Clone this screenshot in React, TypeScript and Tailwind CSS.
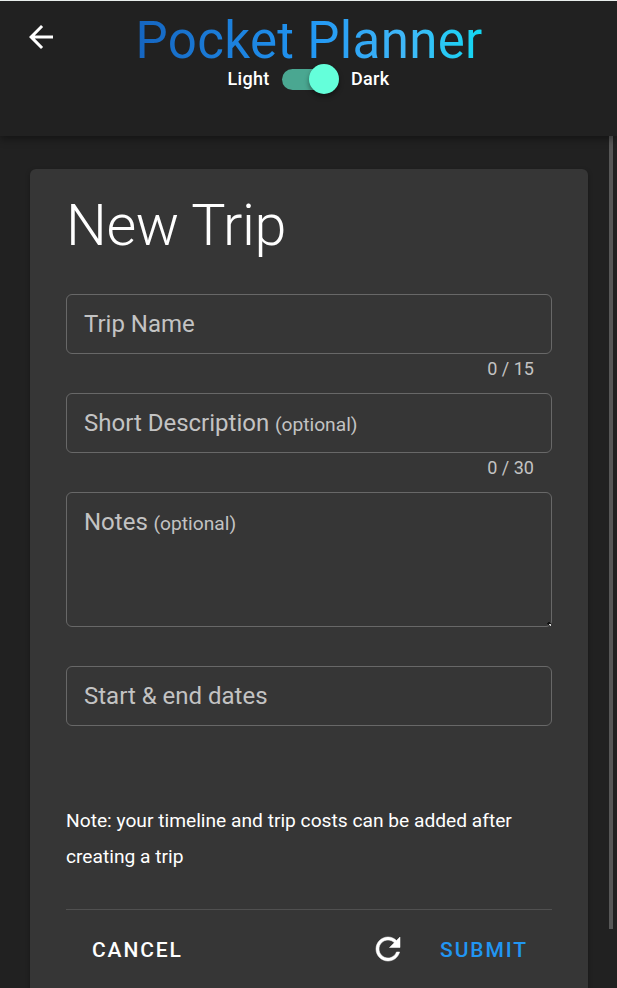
import type { ReactNode } from "react";

function MaterialIcon({ path, bold }: { path: string; bold?: boolean }) {
  return (
    <svg
      viewBox="0 0 24 24"
      className={"block size-9 fill-current " + (bold ? "stroke-current stroke-[0.35]" : "")}
      aria-hidden="true"
    >
      <path d={path} />
    </svg>
  );
}

function Counter({ children }: { children: ReactNode }) {
  return (
    <div className="flex h-[39px] justify-end pt-px pr-[18px] text-[18px] leading-[27px] text-[#c3c3c3]">
      {children}
    </div>
  );
}

function Field({ label, optional, tall }: { label: string; optional?: boolean; tall?: boolean }) {
  return (
    <div
      className={
        "relative rounded-[6px] border border-[#686868] px-[17px] pt-[11px] text-[24px] leading-[36px] whitespace-nowrap text-[#c3c3c3] " +
        (tall ? "h-[135px]" : "h-[60px]")
      }
    >
      {label}
      {optional && <span className="ml-px text-[19.2px]"> (optional)</span>}
      {tall && (
        <svg viewBox="0 0 6 6" className="absolute -right-px -bottom-px size-[6px]">
          <path d="M1 2h1V1h2v1h1v1H4v1H2V3H1z" fill="#111" />
          <path d="M3 3h1v1H3zM4 4h1v1H4zM4 3h1v1H4z" fill="#dcdcdc" />
        </svg>
      )}
    </div>
  );
}

export default function App() {
  return (
    <div className="flex h-[988px] w-[617px] flex-col overflow-hidden bg-[#212121] font-[Roboto,sans-serif] text-white">
      <header className="relative z-10 flex h-[136px] shrink-0 border-t border-[#e9eeec] bg-[#212121] shadow-[0_3px_8px_rgba(0,0,0,0.4)]">
        <button className="ml-[23px] mt-[18px] size-9">
          <MaterialIcon path="M20 11H7.83l5.59-5.59L12 4l-8 8 8 8 1.41-1.41L7.83 13H20v-2z" />
        </button>
        <div className="ml-[76.5px] flex w-[348px] flex-col items-start">
          <h1 className="mt-[15px] bg-[linear-gradient(90deg,#1565c0,#2196f3_50%,#40b8f8_78%,#12d8f2)] bg-clip-text text-[51px] leading-[50px] font-normal tracking-[0.35px] whitespace-nowrap text-transparent">
            Pocket Planner
          </h1>
          <div className="-mt-[2px] ml-[92px] flex h-[30px] items-center text-[18px] leading-[20px] tracking-[0.3px]">
            <span className="w-[54.5px] font-medium">Light</span>
            <span className="flex h-[21px] w-[54px] items-center justify-end rounded-full bg-[#4aa791]">
              <span className="-mr-[3px] size-[30px] shrink-0 rounded-full bg-[#64ffda] shadow-[0_3px_5px_rgba(0,0,0,0.4)]" />
            </span>
            <span className="ml-[15px] font-medium">Dark</span>
          </div>
        </div>
      </header>

      <div className="flex min-h-0 flex-1 justify-between pl-[30px]">
        <main className="mt-[33px] h-[900px] w-[558px] rounded-[6px] bg-[#363636] px-9 pt-[20px] shadow-[0_2px_5px_rgba(0,0,0,0.3)]">
          <h2 className="h-[105px] text-[57.5px] leading-[74px] font-light tracking-[-0.4px] whitespace-nowrap">New Trip</h2>
          <Field label="Trip Name" />
          <Counter>0 / 15</Counter>
          <Field label="Short Description" optional />
          <Counter>0 / 30</Counter>
          <Field label="Notes" optional tall />
          <div className="h-[39px]" />
          <Field label="Start &amp; end dates" />
          <p className="mt-[77px] h-[106px] text-[19.2px] leading-[36px] whitespace-nowrap">
            Note: your timeline and trip costs can be added after
            <br />
            creating a trip
          </p>
          <div className="flex h-[82px] items-center border-t border-[#505050] pr-[24px] pl-[26px] text-[21px] font-medium tracking-[1.9px]">
            <button>CANCEL</button>
            <button className="mb-[4px] ml-auto">
              <MaterialIcon
                bold
                path="M17.65 6.35C16.2 4.9 14.21 4 12 4c-4.42 0-7.99 3.58-7.99 8s3.57 8 7.99 8c3.73 0 6.84-2.55 7.73-6h-2.08c-.82 2.33-3.04 4-5.65 4-3.31 0-6-2.69-6-6s2.69-6 6-6c1.66 0 3.14.69 4.22 1.78L13 11h7V4l-2.35 2.35z"
              />
            </button>
            <button className="ml-[34.5px] text-[#2196f3]">SUBMIT</button>
          </div>
        </main>
        <div className="mr-1 h-[793px] w-1 bg-[#575757]" />
      </div>
    </div>
  );
}
